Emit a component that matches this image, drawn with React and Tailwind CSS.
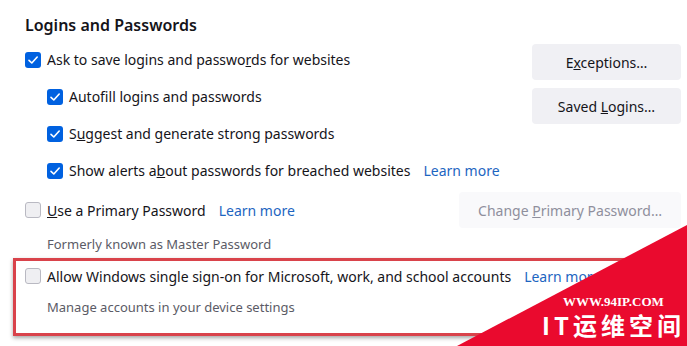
import React from "react";

const font = { fontFamily: '"Noto Sans", "Open Sans", sans-serif' };

const Check = ({ checked }) =>
  checked ? (
    <span className="flex h-4 w-4 shrink-0 items-center justify-center rounded-[3px] bg-[#0061e0]">
      <svg width="12" height="12" viewBox="0 0 12 12" fill="none">
        <path d="M2 6.3 L4.8 9 L10.2 3" stroke="white" strokeWidth="1.6" strokeLinecap="round" strokeLinejoin="round" />
      </svg>
    </span>
  ) : (
    <span className="h-4 w-4 shrink-0 rounded-[3px] border border-[#b9b9c2] bg-[#efeff2]" />
  );

const Row = ({ checked, children, link, className = "" }) => (
  <div className={`flex items-center gap-[6px] ${className}`}>
    <Check checked={checked} />
    <span className="whitespace-nowrap text-[14px] text-[#15141a]">{children}</span>
    {link && <a className="ml-[7px] whitespace-nowrap text-[14px] text-[#1d65c1]">Learn more</a>}
  </div>
);

const Btn = ({ children, disabled, className = "" }) => (
  <button
    className={`flex h-[36px] items-center justify-center rounded-[4px] text-[14px] ${
      disabled ? "bg-[#f9f9fb] text-[#8f8f9d]" : "bg-[#f0f0f4] text-[#15141a]"
    } ${className}`}
  >
    <span className="whitespace-nowrap">{children}</span>
  </button>
);

export default function App() {
  return (
    <div className="relative h-[346px] w-[687px] overflow-hidden bg-white" style={font}>
      <div className="pl-[25px] pr-[6px] pt-[13px]">
        <h2 className="h-[24px] text-[16px] font-semibold leading-[24px] text-[#15141a]">Logins and Passwords</h2>

        <div className="mt-[4px] flex justify-between">
          <div className="flex flex-col">
            <Row checked className="h-[37px]">
              Ask to save logins and passwo<u>r</u>ds for websites
            </Row>
            <Row checked className="h-[37px] pl-[22px]">
              Autof<u>i</u>ll logins and passwords
            </Row>
            <Row checked className="h-[37px] pl-[22px]">
              S<u>u</u>ggest and generate strong passwords
            </Row>
            <Row checked link className="h-[37px] pl-[22px]">
              Show alerts a<u>b</u>out passwords for breached websites
            </Row>
          </div>
          <div className="mt-[3px] flex flex-col gap-[8px]">
            <Btn className="w-[149px]">
              E<u>x</u>ceptions…
            </Btn>
            <Btn className="w-[149px]">
              Saved <u>L</u>ogins…
            </Btn>
          </div>
        </div>

        <div className="flex h-[42px] items-center justify-between">
          <Row link>
            <u>U</u>se a Primary Password
          </Row>
          <Btn disabled className="h-[35px] w-[222px]">
            Change <u>P</u>rimary Password…
          </Btn>
        </div>

        <div className="mt-[3px] h-[20px] pl-[22px] text-[13px] leading-[20px] text-[#5b5b66]">
          Formerly known as Master Password
        </div>

        <div className="ml-[-12px] mt-[4px] border-[3px] border-[#d9434b] pb-[16px] pl-[9px] shadow-[0_2px_4px_rgba(0,0,0,0.35)]">
          <Row link className="h-[30px]">
            Allow Windows single sign-on for Microsoft, work, and school accounts
          </Row>
          <div className="mt-[6px] h-[20px] pl-[22px] text-[13px] leading-[20px] text-[#5b5b66]">
            Manage accounts in your device settings
          </div>
        </div>
      </div>

      <svg className="absolute left-0 top-0" width="687" height="346" viewBox="0 0 687 346">
        <polygon points="687,225 457,346 687,346" fill="#ea0a2e" />
      </svg>
      <div
        className="absolute left-[563px] top-[294px] whitespace-nowrap text-[13px] font-bold leading-[15px] text-white"
        style={{ fontFamily: '"Liberation Serif", serif' }}
      >
        WWW.94IP.COM
      </div>
      <div
        className="absolute left-[542px] top-[312px] whitespace-nowrap text-[24px] font-bold leading-[26px] tracking-[4px] text-white"
        style={{ fontFamily: '"Noto Sans CJK SC", "Noto Sans", sans-serif' }}
      >
        IT运维空间
      </div>
    </div>
  );
}
